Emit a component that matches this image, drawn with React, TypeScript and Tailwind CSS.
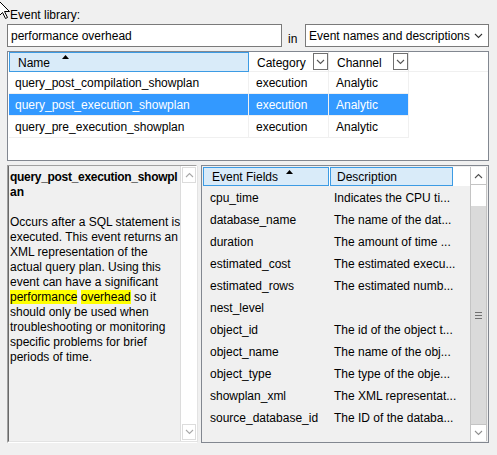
import React from "react";

const events = [
  { name: "query_post_compilation_showplan", category: "execution", channel: "Analytic" },
  { name: "query_post_execution_showplan", category: "execution", channel: "Analytic", selected: true },
  { name: "query_pre_execution_showplan", category: "execution", channel: "Analytic" },
];

const fields: [string, string][] = [
  ["cpu_time", "Indicates the CPU ti..."],
  ["database_name", "The name of the dat..."],
  ["duration", "The amount of time ..."],
  ["estimated_cost", "The estimated execu..."],
  ["estimated_rows", "The estimated numb..."],
  ["nest_level", ""],
  ["object_id", "The id of the object t..."],
  ["object_name", "The name of the obj..."],
  ["object_type", "The type of the obje..."],
  ["showplan_xml", "The XML representat..."],
  ["source_database_id", "The ID of the databa..."],
];

const description = [
  "Occurs after a SQL statement is",
  "executed. This event returns an",
  "XML representation of the",
  "actual query plan. Using this",
  "event can have a significant",
];

const descriptionEnd = [
  "should only be used when",
  "troubleshooting or monitoring",
  "specific problems for brief",
  "periods of time.",
];

function Chevron({ up = false, color = "#606060" }: { up?: boolean; color?: string }) {
  return (
    <svg width="9" height="6" viewBox="0 0 9 6">
      <path
        d={up ? "M1 5l3.5-3.5L8 5" : "M1 1l3.5 3.5L8 1"}
        fill="none"
        stroke={color}
        strokeWidth="1.1"
      />
    </svg>
  );
}

function SortArrow({ left }: { left: number }) {
  return (
    <svg
      className="absolute top-[2px]"
      style={{ left }}
      width="7"
      height="4"
      viewBox="0 0 7 4"
    >
      <path d="M3.5 0L7 4H0z" fill="#000" />
    </svg>
  );
}

function FilterBox() {
  return (
    <div className="flex h-[17px] w-[15px] items-center justify-center border border-[#707070] bg-white">
      <Chevron color="#555" />
    </div>
  );
}

function Cursor() {
  return (
    <svg className="absolute left-[-2px] top-[0px]" width="13" height="20" viewBox="0 0 13 20">
      <path
        d="M0.5 0.5L0.5 16.5L4.5 12.5L7.5 18.5L9.5 17.5L6.5 11.5L11.5 11.5Z"
        fill="#fff"
        stroke="#000"
        strokeWidth="1"
      />
    </svg>
  );
}

export default function App() {
  return (
    <div className="relative h-[455px] w-[497px] overflow-hidden bg-[#f0f0f0] font-['Liberation_Sans',Arial,sans-serif] text-[12px] text-black">
      <Cursor />
      <div className="flex w-[489px] flex-col pl-[7px]">
        <div className="pl-[3px] pt-[8px] leading-[14px]">Event library:</div>

        <div className="mt-[2px] flex h-[23px]">
          <div className="w-[275px] border border-[#7a7a7a] bg-white pl-[3px] pt-[1px] leading-[21px]">
            performance overhead
          </div>
          <div className="mb-[1px] ml-[6px] self-end leading-[14px]">in</div>
          <div className="ml-auto flex w-[184px] items-center justify-between border border-[#7a7a7a] bg-white pl-[3px] pr-[5px]">
            <span className="pt-[2px] leading-[21px]">Event names and descriptions</span>
            <Chevron color="#333" />
          </div>
        </div>

        <div className="mt-[4px] h-[110px] border border-[#828790] bg-white pl-[1px]">
          <div className="flex h-[20px]">
            <div className="relative h-[20px] w-[240px] border border-[#3c9be4] bg-[#d9ebf9] pl-[8px] pt-[1px] leading-[18px]">
              Name
              <SortArrow left={52} />
            </div>
            <div className="flex h-[20px] w-[80px] justify-between border-b border-r border-b-[#f0f0f0] border-r-[#e5e5e5] pl-[8px] leading-[18px]">
              <span className="pt-[2px]">Category</span>
              <div className="mt-[1px]">
                <FilterBox />
              </div>
            </div>
            <div className="flex h-[20px] w-[80px] justify-between border-b border-r border-b-[#f0f0f0] border-r-[#e5e5e5] pl-[8px] leading-[18px]">
              <span className="pt-[2px]">Channel</span>
              <div className="mt-[1px]">
                <FilterBox />
              </div>
            </div>
            <div className="h-[20px] flex-1 border-b border-[#f0f0f0]" />
          </div>
          {events.map((e) => {
            const cell = e.selected ? "bg-[#3399ff] text-white" : "";
            return (
              <div key={e.name} className="flex h-[22px] leading-[19px]">
                <div className={`w-[240px] border-b border-r border-[#f0f0f0] pl-[6px] pt-[2px] ${cell}`}>{e.name}</div>
                <div className={`w-[80px] border-b border-r border-[#f0f0f0] pl-[7px] pt-[2px] ${cell}`}>{e.category}</div>
                <div className={`w-[80px] border-b border-r border-[#f0f0f0] pl-[7px] pt-[2px] ${cell}`}>{e.channel}</div>
              </div>
            );
          })}
        </div>

        <div className="mt-[4px] flex h-[278px] gap-[4px]">
          <div className="flex w-[190px] border border-b-white border-l-[#a0a0a0] border-r-white border-t-[#a0a0a0]">
            <div className="flex flex-1 border-l border-r border-b border-l-[#696969] border-r-[#e3e3e3] border-b-[#e3e3e3]">
              <div className="flex-1 overflow-hidden whitespace-nowrap pl-[1px] pt-[4px] leading-[15px]">
                <div className="font-bold tracking-[-0.3px]">query_post_execution_showpl</div>
                <div className="font-bold">an</div>
                <div className="h-[15px]" />
                {description.map((l) => (
                  <div key={l}>{l}</div>
                ))}
                <div>
                  <span className="bg-[#ffff00]">performance</span>{" "}
                  <span className="bg-[#ffff00]">overhead</span> so it
                </div>
                {descriptionEnd.map((l) => (
                  <div key={l}>{l}</div>
                ))}
              </div>
              <div className="flex w-[17px] flex-col border-l border-[#dcdcdc] bg-white">
                <div className="mx-[1px] mt-[1px] flex h-[16px] items-center justify-center border border-[#dcdcdc]">
                  <Chevron up color="#a8a8a8" />
                </div>
                <div className="flex-1" />
                <div className="mx-[1px] mb-[1px] flex h-[16px] items-center justify-center border border-[#dcdcdc]">
                  <Chevron color="#a8a8a8" />
                </div>
              </div>
            </div>
          </div>

          <div className="flex w-[288px] border border-[#828790] p-[1px]">
            <div className="flex-1">
              <div className="flex h-[19px] bg-white">
                <div className="relative h-[19px] w-[126px] border border-[#3c9be4] bg-[#d9ebf9] pl-[8px] pt-[1px] leading-[17px]">
                  Event Fields
                  <SortArrow left={82} />
                </div>
                <div className="ml-[1px] h-[19px] w-[123px] border border-[#3c9be4] bg-[#d9ebf9] pl-[6px] pt-[1px] leading-[17px]">
                  Description
                </div>
              </div>
              {fields.map(([f, d]) => (
                <div key={f} className="flex h-[22px] pt-[2px] leading-[20px]">
                  <div className="w-[126px] pl-[7px]">{f}</div>
                  <div className="flex-1 whitespace-nowrap pl-[5px]">{d}</div>
                </div>
              ))}
            </div>
            <div className="flex w-[17px] flex-col border-x border-[#c4c4c4]">
              <div className="flex h-[18px] items-center justify-center border-b border-[#c4c4c4] bg-white">
                <Chevron up color="#505050" />
              </div>
              <div className="h-[21px] bg-white" />
              <div className="flex flex-1 flex-col items-center justify-center gap-[2px] bg-[#dadada]">
                <div className="h-px w-[7px] bg-[#707070]" />
                <div className="h-px w-[7px] bg-[#707070]" />
                <div className="h-px w-[7px] bg-[#707070]" />
              </div>
              <div className="flex h-[17px] items-center justify-center border-t border-[#c4c4c4] bg-white">
                <Chevron color="#909090" />
              </div>
            </div>
          </div>
        </div>
      </div>
    </div>
  );
}
